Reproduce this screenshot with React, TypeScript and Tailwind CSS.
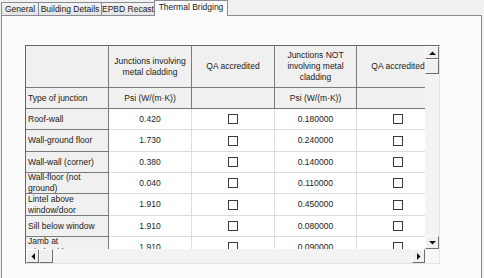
import React from 'react';

type Row = { label: string; a: string; b: string; h: string };

const rows: Row[] = [
  { label: 'Roof-wall', a: '0.420', b: '0.180000', h: 'h-[21px]' },
  { label: 'Wall-ground floor', a: '1.730', b: '0.240000', h: 'h-[22px]' },
  { label: 'Wall-wall (corner)', a: '0.380', b: '0.140000', h: 'h-[21px]' },
  { label: 'Wall-floor (not\nground)', a: '0.040', b: '0.110000', h: 'h-[21px]' },
  { label: 'Lintel above\nwindow/door', a: '1.910', b: '0.450000', h: 'h-[22px]' },
  { label: 'Sill below window', a: '1.910', b: '0.080000', h: 'h-[21px]' },
  { label: 'Jamb at\nwindow/door', a: '1.910', b: '0.090000', h: 'h-[21px]' },
];

function Arrow({ dir }: { dir: 'up' | 'down' | 'left' | 'right' }) {
  const pts = {
    up: '0,4 7,4 3.5,0.5',
    down: '0,0 7,0 3.5,3.5',
    left: '4,0 4,7 0.5,3.5',
    right: '0,0 0,7 3.5,3.5',
  }[dir];
  const vertical = dir === 'up' || dir === 'down';
  return (
    <svg width={vertical ? 7 : 4} height={vertical ? 4 : 7} viewBox={vertical ? '0 0 7 4' : '0 0 4 7'}>
      <polygon points={pts} fill="#111" />
    </svg>
  );
}

function Btn({ className, children }: { className: string; children?: React.ReactNode }) {
  return (
    <div
      className={
        'flex items-center justify-center bg-[#f0f0f0] border border-t-white border-l-white border-r-[#6e6e6e] border-b-[#6e6e6e] shrink-0 ' +
        className
      }
    >
      {children}
    </div>
  );
}

function Checkbox() {
  return <div className="w-[10px] h-[10px] border border-[#3a3a3a] bg-white" />;
}

function Tab({ label, className }: { label: string; className: string }) {
  return (
    <div
      className={
        'flex items-center justify-center border border-b-0 border-[#898c95] -ml-px first:ml-0 whitespace-nowrap ' +
        className
      }
    >
      {label}
    </div>
  );
}

export default function App() {
  return (
    <div className="w-[484px] h-[278px] overflow-hidden bg-[#f0f0f0] font-['Liberation_Sans',Arial,sans-serif] text-[8.5px] text-[#1a1a1a]">
      {/* tab strip */}
      <div className="flex items-end h-[15px] pl-[1px]">
        <Tab label="General" className="w-[38px] h-[13px] bg-linear-to-b from-[#f3f3f3] to-[#e4e4e4]" />
        <Tab label="Building Details" className="w-[64px] h-[13px] bg-linear-to-b from-[#f3f3f3] to-[#e4e4e4]" />
        <Tab label="EPBD Recast" className="w-[54px] h-[13px] bg-linear-to-b from-[#f3f3f3] to-[#e4e4e4]" />
        <Tab label="Thermal Bridging" className="w-[74px] h-[16px] -mb-px pb-[2px] relative z-10 bg-[#fbfbfb]" />
      </div>

      {/* tab page */}
      <div className="ml-[1px] w-[481px] h-[270px] border border-[#898c95] bg-[#fbfbfb] pl-[23px] pt-[29px]">
        <div className="w-[415px] h-[219px] flex flex-col border border-t-[#646464] border-l-[#646464] border-r-[#e3e3e3] border-b-[#e3e3e3]">
          <div className="flex h-[203px]">
            {/* cells */}
            <div className="w-[399px] overflow-hidden">
              <div className="w-[414px]">
                <div className="flex h-[42px] bg-[#f0f0f0] leading-[11px] text-center">
                  <div className="w-[83px] shrink-0 border-r border-b border-[#7a7a7a]" />
                  <div className="w-[83px] shrink-0 border-r border-b border-[#7a7a7a] flex items-center justify-center">
                    Junctions involving
                    <br />
                    metal cladding
                  </div>
                  <div className="w-[83px] shrink-0 border-r border-b border-[#7a7a7a] flex items-center justify-center">
                    QA accredited
                  </div>
                  <div className="w-[82px] shrink-0 border-r border-b border-[#7a7a7a] flex items-center justify-center">
                    Junctions NOT
                    <br />
                    involving metal
                    <br />
                    cladding
                  </div>
                  <div className="w-[83px] shrink-0 border-r border-b border-[#7a7a7a] flex items-center justify-center whitespace-nowrap">
                    QA accredited
                  </div>
                </div>
                <div className="flex h-[21px] bg-[#f0f0f0]">
                  <div className="w-[83px] shrink-0 border-r border-b border-[#7a7a7a] flex items-center pl-[2px]">
                    Type of junction
                  </div>
                  <div className="w-[83px] shrink-0 border-r border-b border-[#7a7a7a] flex items-center justify-center">
                    Psi (W/(m·K))
                  </div>
                  <div className="w-[83px] shrink-0 border-r border-b border-[#7a7a7a]" />
                  <div className="w-[82px] shrink-0 border-r border-b border-[#7a7a7a] flex items-center justify-center">
                    Psi (W/(m·K))
                  </div>
                  <div className="w-[83px] shrink-0 border-r border-b border-[#7a7a7a]" />
                </div>
                {rows.map((r) => (
                  <div key={r.label} className={'flex bg-white ' + r.h}>
                    <div className="w-[83px] shrink-0 border-r border-b border-[#7a7a7a] bg-[#f0f0f0] flex items-center pl-[2px] overflow-hidden whitespace-pre-line leading-[11px]">
                      {r.label}
                    </div>
                    <div className="w-[83px] shrink-0 border-r border-b border-[#dcdcdc] flex items-center justify-center">
                      {r.a}
                    </div>
                    <div className="w-[83px] shrink-0 border-r border-b border-[#dcdcdc] flex items-center justify-center">
                      <Checkbox />
                    </div>
                    <div className="w-[82px] shrink-0 border-r border-b border-[#dcdcdc] flex items-center justify-center">
                      {r.b}
                    </div>
                    <div className="w-[83px] shrink-0 border-r border-b border-[#dcdcdc] flex items-center justify-center">
                      <Checkbox />
                    </div>
                  </div>
                ))}
              </div>
            </div>
            {/* vertical scrollbar */}
            <div className="w-[14px] flex flex-col bg-[#f3f3f3]">
              <Btn className="h-[13px]">
                <Arrow dir="up" />
              </Btn>
              <Btn className="h-[15px]" />
              <div className="flex-1" />
              <Btn className="h-[13px]">
                <Arrow dir="down" />
              </Btn>
            </div>
          </div>
          {/* horizontal scrollbar */}
          <div className="flex h-[14px]">
            <div className="w-[399px] flex bg-[#f3f3f3]">
              <Btn className="w-[13px]">
                <Arrow dir="left" />
              </Btn>
              <Btn className="w-[14px]" />
              <div className="flex-1" />
              <Btn className="w-[13px]">
                <Arrow dir="right" />
              </Btn>
            </div>
            <div className="w-[14px] bg-[#f7f7f7]" />
          </div>
        </div>
      </div>
    </div>
  );
}
